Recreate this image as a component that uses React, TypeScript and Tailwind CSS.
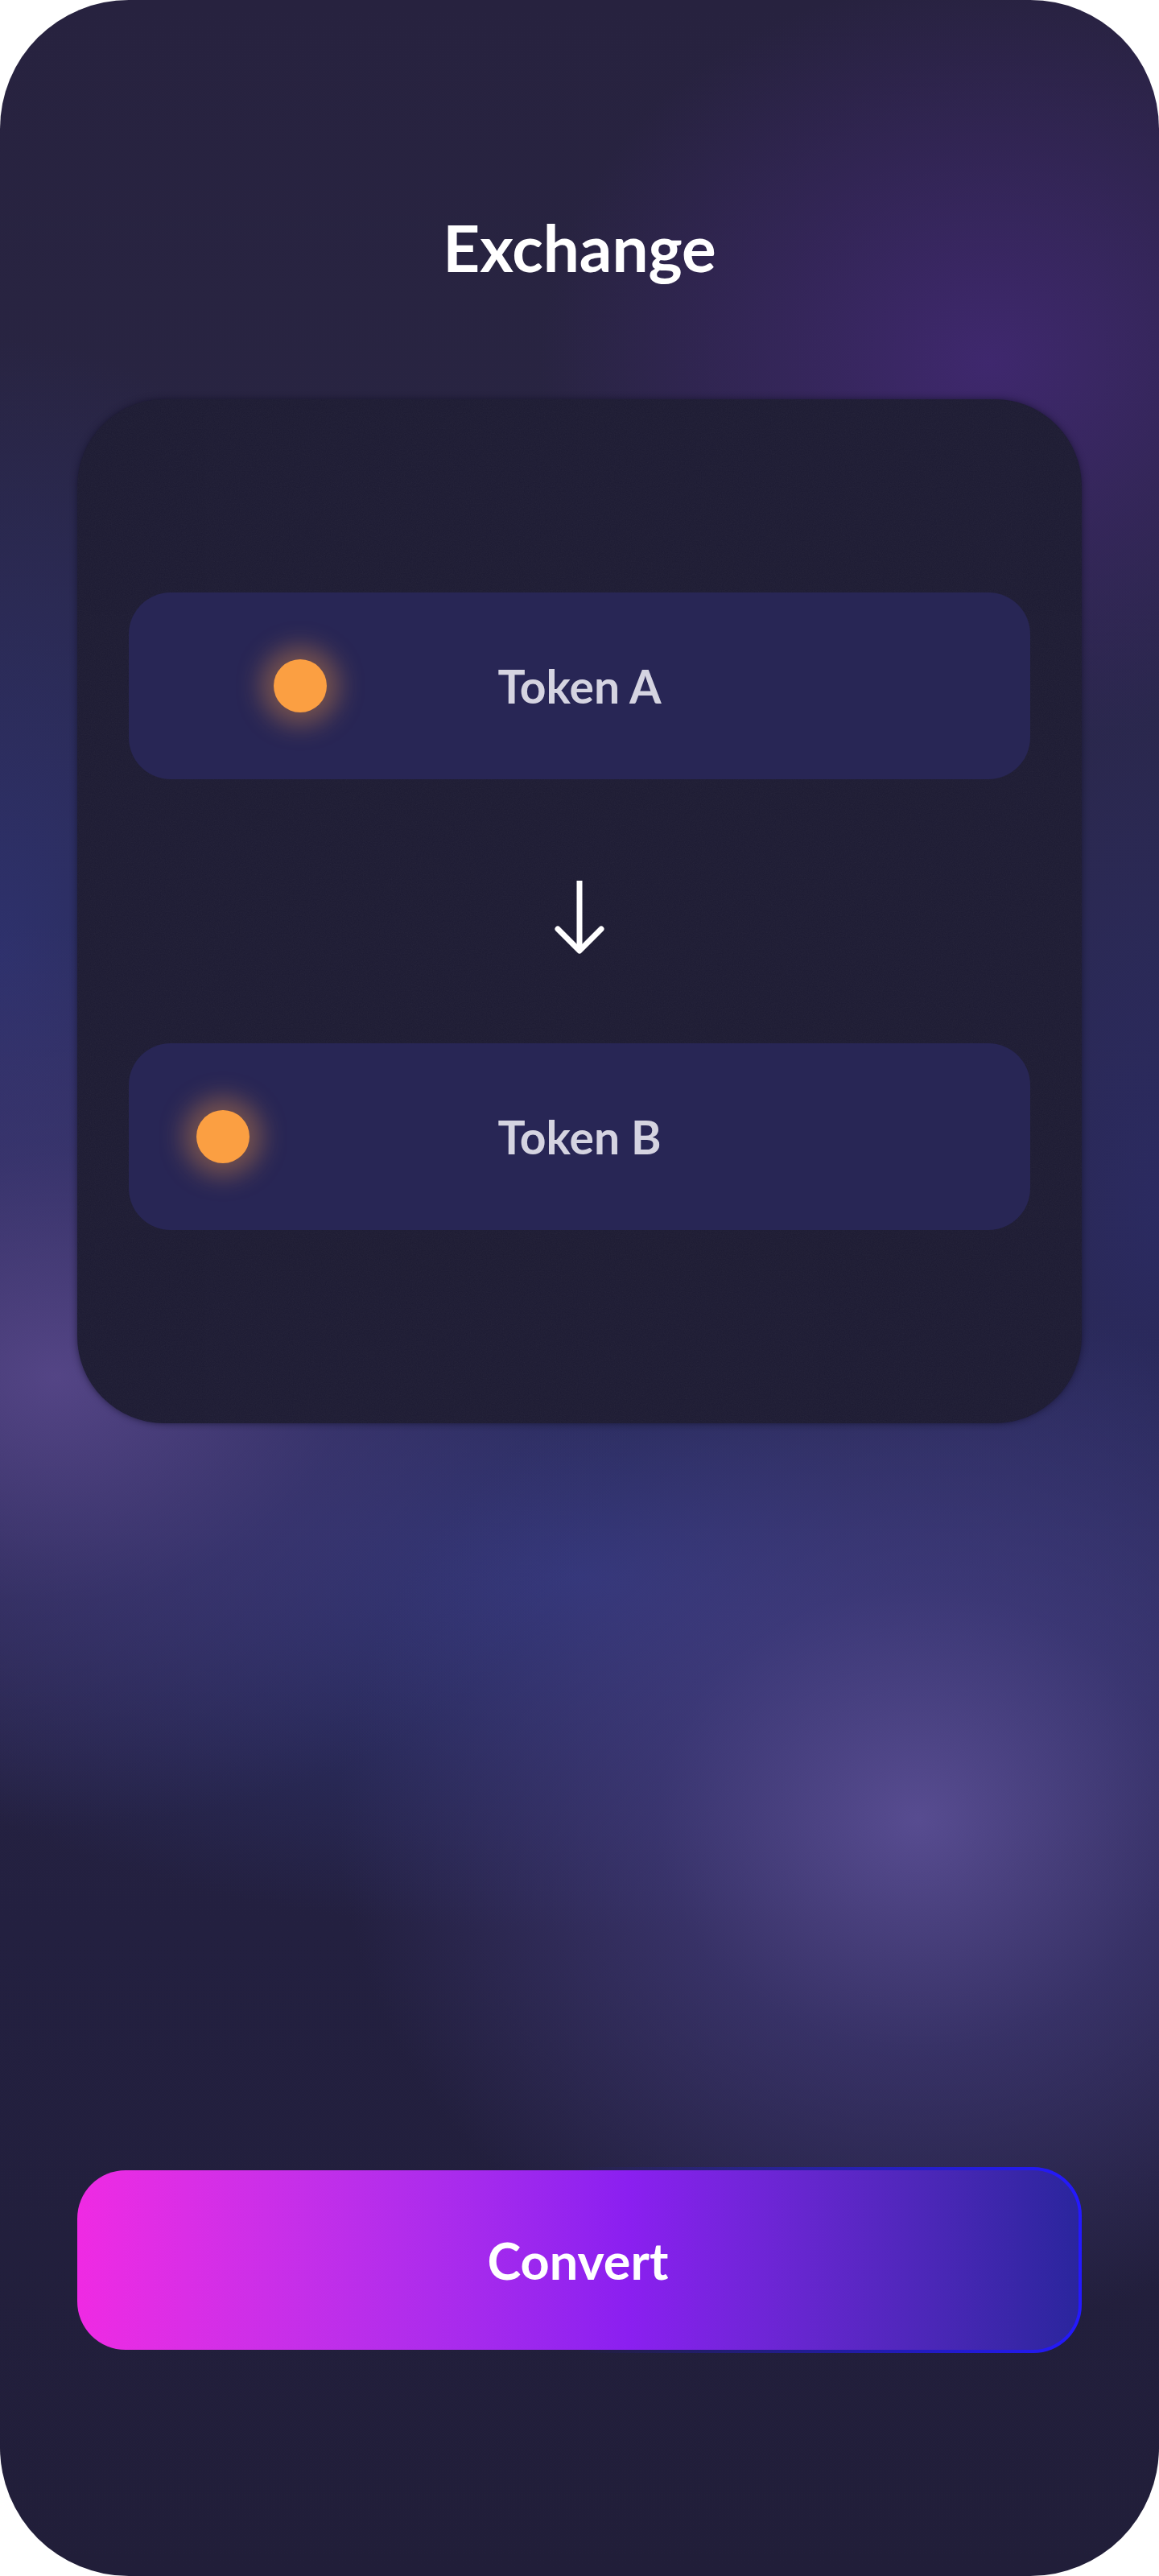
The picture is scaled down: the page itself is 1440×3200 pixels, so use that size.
import React from "react";

const font = "font-['Lato','Inter','Noto_Sans',sans-serif]";

function Grain() {
  return (
    <svg className="pointer-events-none absolute inset-0 h-full w-full opacity-[0.05]" aria-hidden>
      <filter id="grain">
        <feTurbulence type="fractalNoise" baseFrequency="0.85" numOctaves="2" stitchTiles="stitch" />
        <feColorMatrix type="saturate" values="0" />
      </filter>
      <rect width="100%" height="100%" filter="url(#grain)" />
    </svg>
  );
}

function TokenRow({ label, dotPad }: { label: string; dotPad: string }) {
  return (
    <div className="grid h-[232px] grid-cols-[1fr_auto_1fr] items-center rounded-[52px] bg-[#282655]">
      <div className={dotPad}>
        <span className="block h-[66px] w-[66px] rounded-full bg-[#fb9f42] shadow-[0_0_30px_16px_rgba(251,159,66,0.36)]" />
      </div>
      <span className="text-[57px] font-bold leading-none text-[#d5d4e1]">{label}</span>
      <div />
    </div>
  );
}

function ArrowDown() {
  return (
    <svg width="62" height="92" viewBox="0 0 62 92" fill="none" className="mx-auto block">
      <path d="M31 0V86" stroke="white" strokeWidth="7" />
      <path d="M4 60L31 87L58 60" stroke="white" strokeWidth="7" strokeLinecap="round" strokeLinejoin="round" />
    </svg>
  );
}

export default function App() {
  return (
    <div className="bg-white">
      <div
        className={`${font} flex h-[3200px] w-[1440px] flex-col items-center overflow-hidden rounded-[160px] pb-[277px] bg-[radial-gradient(ellipse_720px_640px_at_1140px_2260px,rgba(90,78,148,0.95),rgba(72,64,134,0.55)_45%,transparent_100%),radial-gradient(ellipse_720px_560px_at_70px_1710px,rgba(86,70,136,0.95),rgba(70,60,125,0.45)_50%,transparent_100%),radial-gradient(ellipse_1000px_440px_at_720px_1960px,rgba(48,54,122,0.95),transparent_100%),radial-gradient(ellipse_520px_760px_at_0px_1180px,rgba(46,50,112,0.9),transparent_100%),radial-gradient(ellipse_560px_480px_at_1230px_450px,rgba(64,40,112,0.95),transparent_100%),radial-gradient(ellipse_420px_900px_at_1440px_1500px,rgba(44,44,104,0.8),transparent_100%),linear-gradient(to_bottom,#27223f,#2a2745_35%,#232040_75%,#211e39)]`}
      >
        <h1 className="mt-[267px] text-[80px] font-bold leading-none text-white">Exchange</h1>

        <div className="relative mt-[149px] w-[1248px] overflow-hidden rounded-[108px] bg-[#1d1b33] px-16 pb-[240px] pt-[240px] shadow-[0_0_8px_rgba(18,16,40,0.7)]">
          <Grain />
          <div className="relative flex flex-col">
            <TokenRow label="Token A" dotPad="pl-[180px]" />
            <div className="pb-[110px] pt-[126px]">
              <ArrowDown />
            </div>
            <TokenRow label="Token B" dotPad="pl-[84px]" />
          </div>
        </div>

        <button className="mt-auto w-[1248px] rounded-[60px] bg-gradient-to-r from-transparent from-50% to-[#2419ff] p-[4px] pl-0">
          <span className="flex h-[223px] items-center justify-center rounded-[56px] rounded-l-[60px] bg-gradient-to-r from-[#ef2ae3] via-[#8b1ff0] via-55% to-[#2a259d] text-[63px] font-bold leading-none text-white">
            Convert
          </span>
        </button>
      </div>
    </div>
  );
}
